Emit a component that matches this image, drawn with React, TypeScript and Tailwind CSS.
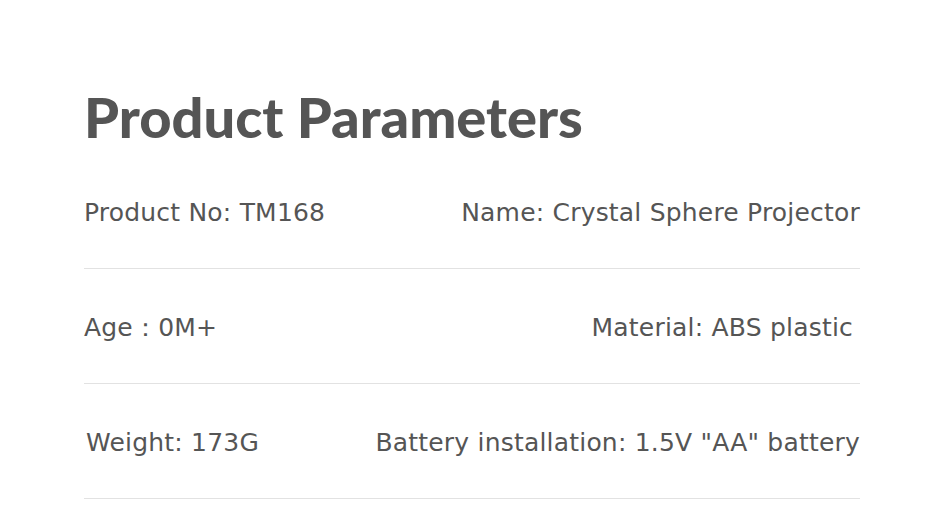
const rows: [string, string, string?][] = [
  ["Product No: TM168", "Name: Crystal Sphere Projector"],
  ["Age：0M+", "Material: ABS plastic", "pr-[7px]"],
  ["Weight: 173G", 'Battery installation: 1.5V "AA" battery'],
];

export default function App() {
  return (
    <div className="w-[944px] h-[524px] bg-white overflow-hidden">
      <div className="w-[776px] ml-[84px] pt-[80px] text-[#555555]">
        {/* Heading */}
        <h1
          className="text-[56px] leading-[74px] font-black"
          style={{ fontFamily: "Lato, sans-serif" }}
        >
          Product Parameters
        </h1>

        {/* Rows */}
        <div style={{ fontFamily: "'DejaVu Sans', sans-serif" }}>
          {rows.map(([left, right, extra], i) => (
            <div
              key={i}
              className="flex items-center justify-between h-[115px] pt-[4px] border-b border-[#e2e2e2] text-[25px] tracking-[0.2px]"
            >
              <span className={i === 2 ? "pl-[2px]" : ""}>{left}</span>
              <span className={extra ?? ""}>{right}</span>
            </div>
          ))}
        </div>
      </div>
    </div>
  );
}
